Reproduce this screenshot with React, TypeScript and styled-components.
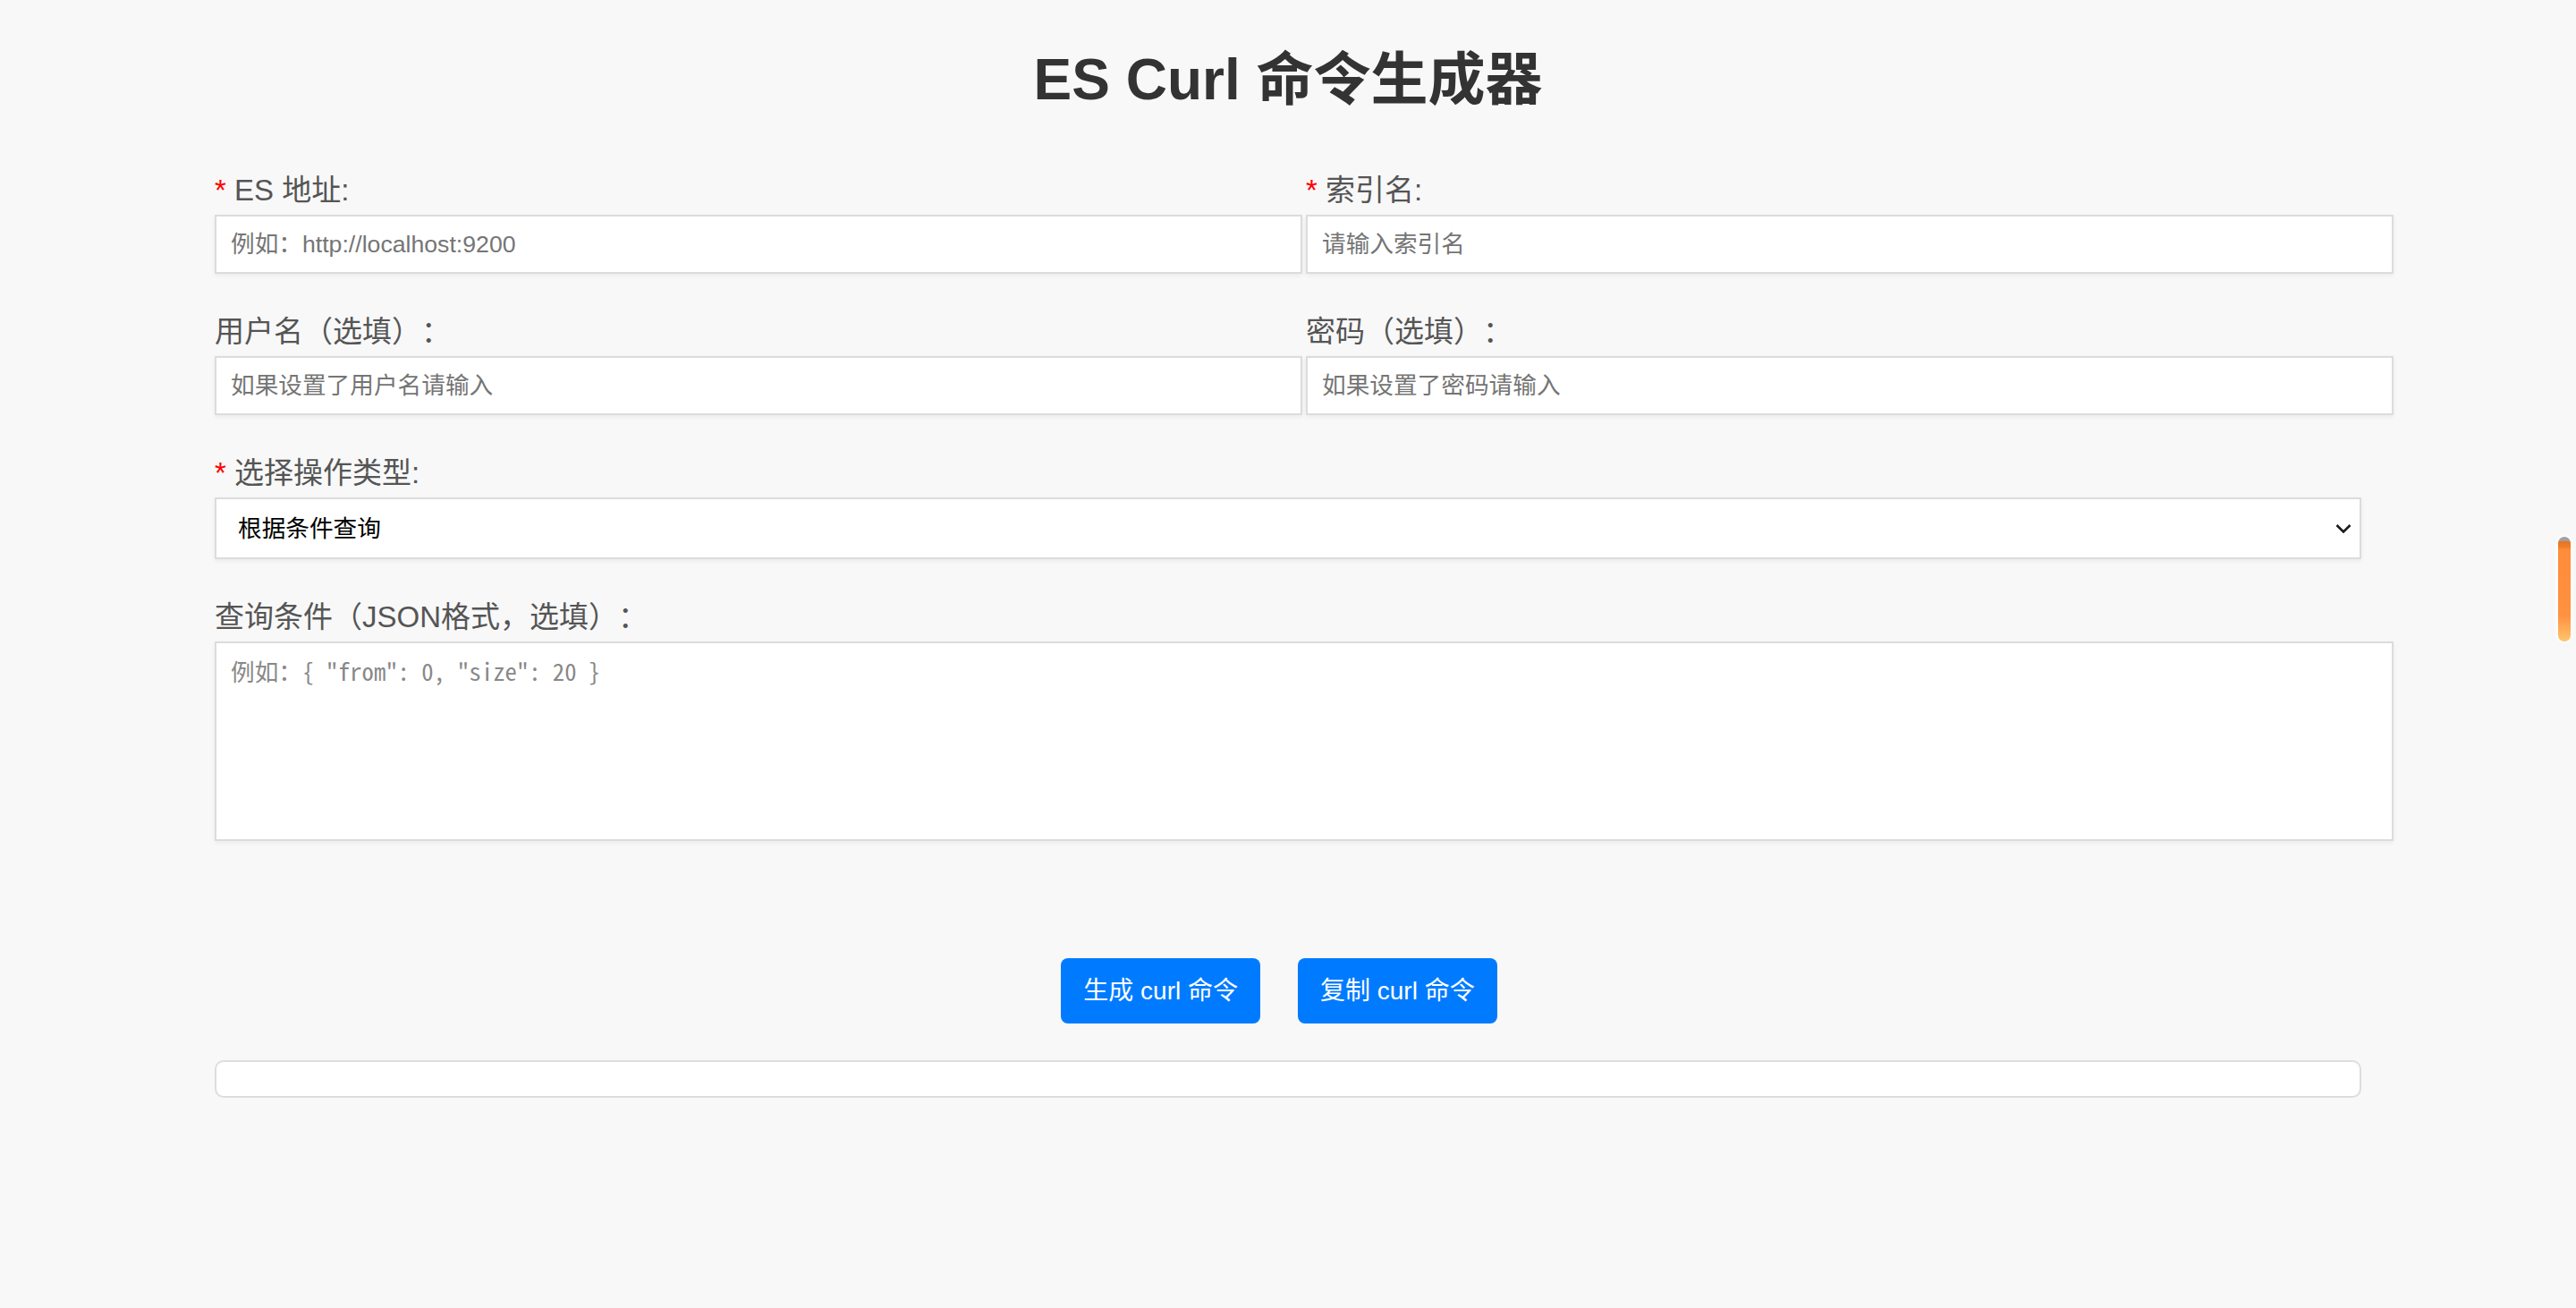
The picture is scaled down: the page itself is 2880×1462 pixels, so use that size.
import React from "react";
import styled, { createGlobalStyle } from "styled-components";

const GlobalStyle = createGlobalStyle`
  html, body { margin: 0; padding: 0; }
  body {
    background: #f8f8f8;
    font-family: "Liberation Sans", Arial, "Noto Sans CJK SC", sans-serif;
    color: #333;
    text-spacing-trim: space-all;
  }
`;

const Page = styled.div`
  width: 2400px;
  margin: 0 auto;
  padding-top: 50px;
  padding-bottom: 100px;
`;

const Title = styled.h1`
  margin: 0 0 60px;
  text-align: center;
  font-size: 64px;
  line-height: 78px;
  font-weight: 700;
  color: #333;
`;

const Row = styled.div`
  display: flex;
  gap: 40px;
`;

const Group = styled.div<{ $half?: boolean }>`
  ${(p) => (p.$half ? "flex: 1; min-width: 0;" : "")}
  margin-bottom: 40px;
`;

const Label = styled.label`
  display: block;
  padding-top: 8px;
  font-size: 33px;
  line-height: 34px;
  color: #555;
  margin-bottom: 10px;
  text-spacing-trim: space-all;
`;

const Required = styled.span`
  color: #f00;
`;

const fieldBase = `
  display: block;
  box-sizing: content-box;
  width: 100%;
  padding: 16px;
  border: 2px solid #dcdcdc;
  background: #fff;
  box-shadow: 0 2px 5px rgba(0, 0, 0, 0.06);
  outline: none;
  border-radius: 0;
  font-size: 26.67px;
  line-height: 30px;
  color: #222;
  margin: 0;
`;

const TextInput = styled.input`
  ${fieldBase}
  height: 30px;
  font-family: "Liberation Sans", Arial, "Noto Sans CJK SC", sans-serif;
  &::placeholder { color: #757575; }
`;

const SelectWrap = styled.div`
  position: relative;
  width: 2400px;
  margin-top: 6px;
`;

const Select = styled.select`
  display: block;
  box-sizing: border-box;
  width: 100%;
  height: 69px;
  appearance: none;
  -webkit-appearance: none;
  padding: 0 50px 0 24px;
  border: 2px solid #dcdcdc;
  border-radius: 0;
  background: #fff;
  box-shadow: 0 2px 5px rgba(0, 0, 0, 0.06);
  font-family: "Liberation Sans", Arial, "Noto Sans CJK SC", sans-serif;
  font-size: 26.67px;
  color: #000;
  outline: none;
`;

const Chevron = styled.svg`
  position: absolute;
  right: 11px;
  top: 50%;
  transform: translateY(-50%);
  pointer-events: none;
`;

const TextArea = styled.textarea`
  ${fieldBase}
  height: 187px;
  resize: none;
  font-family: "Noto Sans Mono CJK SC", "Liberation Mono", "Noto Sans CJK SC", monospace;
  &::placeholder { color: #888; }
`;

const ButtonRow = styled.div`
  display: flex;
  justify-content: center;
  gap: 22px;
  margin-top: 131px;
`;

const Button = styled.button`
  margin-right: 20px;
  padding: 20px 25px;
  border: none;
  border-radius: 8px;
  background: #007bff;
  color: #fff;
  font-family: "Liberation Sans", Arial, "Noto Sans CJK SC", sans-serif;
  font-size: 28px;
  line-height: 33px;
  cursor: pointer;
`;

const Result = styled.div`
  margin-top: 41px;
  padding: 19px;
  background: #fff;
  border: 2px solid #ddd;
  border-radius: 10px;
`;

const ScrollPill = styled.div`
  position: fixed;
  right: 6px;
  top: 600px;
  width: 14px;
  height: 117px;
  border-radius: 7px;
  background: linear-gradient(
    to bottom,
    #a0a0a0 0px,
    #a0a0a0 5px,
    #e8731f 5px,
    #f27f2b 12px,
    #ff8c3a 14px,
    #ff9140 75%,
    #ffc56c 100%
  );
  box-shadow: 0 0 6px 3px rgba(255, 255, 255, 0.95), 0 0 12px 4px rgba(0, 0, 0, 0.04);
`;

export default function App() {
  return (
    <>
      <GlobalStyle />
      <Page>
        <Title>ES Curl 命令生成器</Title>
        <Row>
          <Group $half>
            <Label>
              <Required>*</Required> ES 地址:
            </Label>
            <TextInput placeholder="例如：http://localhost:9200" />
          </Group>
          <Group $half>
            <Label>
              <Required>*</Required> 索引名:
            </Label>
            <TextInput placeholder="请输入索引名" />
          </Group>
        </Row>
        <Row>
          <Group $half>
            <Label>用户名（选填）：</Label>
            <TextInput placeholder="如果设置了用户名请输入" />
          </Group>
          <Group $half>
            <Label>密码（选填）：</Label>
            <TextInput type="password" placeholder="如果设置了密码请输入" />
          </Group>
        </Row>
        <Group>
          <Label>
            <Required>*</Required> 选择操作类型:
          </Label>
          <SelectWrap>
            <Select defaultValue="query">
              <option value="query">根据条件查询</option>
              <option value="get">根据ID查询</option>
              <option value="delete">删除文档</option>
            </Select>
            <Chevron width="18" height="11" viewBox="0 0 18 11">
              <polyline points="1.5,1.5 9,9 16.5,1.5" fill="none" stroke="#1a1a1a" strokeWidth="2.6" />
            </Chevron>
          </SelectWrap>
        </Group>
        <Group>
          <Label>查询条件（JSON格式，选填）：</Label>
          <TextArea placeholder={'例如：{ "from": 0, "size": 20 }'} />
        </Group>
        <ButtonRow>
          <Button>生成 curl 命令</Button>
          <Button>复制 curl 命令</Button>
        </ButtonRow>
        <Result />
      </Page>
      <ScrollPill />
    </>
  );
}
